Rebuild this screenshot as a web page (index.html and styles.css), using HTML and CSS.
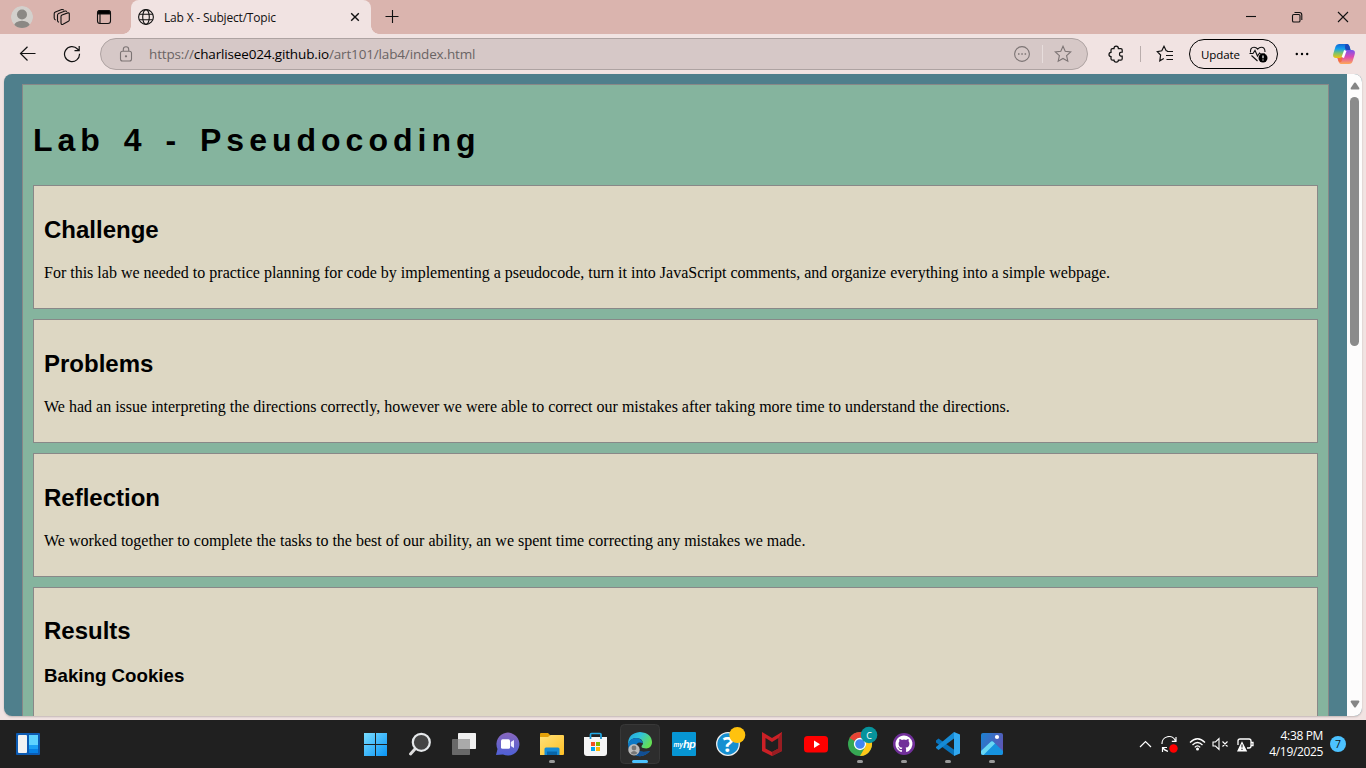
FILE: index.html
```html
<!DOCTYPE html>
<html lang="en">
<head>
<meta charset="utf-8">
<title>Lab X - Subject/Topic</title>
<link rel="stylesheet" href="styles.css">
</head>
<body>
<header class="titlebar">
  <svg class="profile" width="22" height="22" viewBox="0 0 22 22"><defs><clipPath id="pc"><circle cx="11" cy="11" r="11"/></clipPath></defs><g clip-path="url(#pc)"><circle cx="11" cy="11" r="11" fill="#d3d0cc"/><circle cx="11" cy="8.5" r="5" fill="#8b8884"/><ellipse cx="11" cy="20" rx="8" ry="5.2" fill="#8b8884"/></g></svg>
  <svg class="line workspaces" width="18" height="18" viewBox="0 0 18 18"><path d="M8 8.500Q8 7.300 9 6.900L14.800 4.900Q16.300 4.600 16.300 6V12Q16.300 12.900 15.400 13.300L10 16.300Q8 17 8 15ZM6 14.300Q4.500 14 4.500 12.500V7.300Q4.500 6 5.600 5.500L12 3Q13.300 2.700 13.800 3.800M2.700 12Q1.200 11.500 1.200 10V5.700Q1.200 4.500 2.400 4L8.700 1.500Q10.300 1.200 10.800 2.300"/></svg>
  <svg class="line actions" width="16" height="16" viewBox="0 0 16 16"><rect x="1.500" y="1.500" width="13" height="13" rx="2.500"/><path d="M2 2.500Q2 1.500 4 1.500H12Q14 1.500 14 2.500V5H2Z" fill="#000"/><path d="M4 5V14"/></svg>
  <div class="tab">
    <svg class="line globe" width="16" height="16" viewBox="0 0 16 16"><circle cx="8" cy="8" r="7.400"/><ellipse cx="8" cy="8" rx="3.300" ry="7.400"/><path d="M1.300 5.300H14.700M1.300 10.700H14.700"/></svg>
    <span class="tab-title">Lab X - Subject/Topic</span>
    <svg class="line" width="10" height="10" viewBox="0 0 10 10"><path d="M1.200 1.200 8.800 8.800M8.800 1.200 1.200 8.800" stroke-width="1.400"/></svg>
  </div>
  <svg class="line plus" width="14" height="14" viewBox="0 0 14 14"><path d="M.5 6.500H13.500M7.500 0V13"/></svg>
  <div class="controls">
    <svg class="line" width="12" height="12" viewBox="0 0 12 12"><path d="M1 5.500H11"/></svg>
    <svg class="line" width="12" height="12" viewBox="0 0 12 12"><rect x="1.500" y="3.500" width="7.500" height="7.500" rx="1.300"/><path d="M3.500 1.500H8.500Q10.800 1.500 10.800 4V9"/></svg>
    <svg class="line" width="12" height="12" viewBox="0 0 12 12"><path d="M1 1 11 11M11 1 1 11"/></svg>
  </div>
</header>

<nav class="toolbar">
  <svg class="line back" width="18" height="16" viewBox="0 0 18 16"><path d="M8.500 .8 1.500 7.500 8.500 14.500M1.500 7.500H16.500" stroke-width="1.200"/></svg>
  <svg class="line reload" width="18" height="18" viewBox="0 0 18 18"><path d="M16.500 8.700A7.500 7.500 0 1 1 14.500 4L16 5.500M16.200 1V5.700H11.500" stroke-width="1.200"/></svg>
  <div class="address">
    <svg class="line gray lock" width="14" height="16" viewBox="0 0 14 16"><rect x="1.500" y="5.200" width="11" height="9.800" rx="2"/><path d="M4.300 5V3.500A2.700 2.700 0 0 1 9.700 3.500V5"/><circle cx="7" cy="10.300" r=".6" fill="#707070"/></svg>
    <div class="url"><span>https://</span><b>charlisee024.github.io</b><span>/art101/lab4/index.html</span></div>
    <svg class="line gray" width="16" height="16" viewBox="0 0 16 16"><circle cx="8" cy="8" r="7.400"/><path d="M4 8H5.500M7.300 8H8.800M10.600 8H12.100" stroke-width="1.500"/></svg>
    <i class="split pale"></i>
    <svg class="line gray" width="18" height="18" viewBox="0 0 18 18"><path d="M9 1.300 11.200 6.300 16.700 6.900 12.600 10.600 13.800 16.200 9 13.400 4.200 16.200 5.400 10.600 1.300 6.900 6.800 6.300Z"/></svg>
  </div>
  <svg class="line extension" width="16" height="18" viewBox="0 0 16 18"><path d="M4.500 3.500H6Q6 1.200 8.200 1.200T10.400 3.500H12.800Q14.200 3.500 14.200 5V7.200Q11.500 7 11.500 9.200T14.200 11.200V13.700Q14.200 15.200 12.800 15.200H10.400Q10.400 17 8.200 17T6 15.200H4.500Q3 15.200 3 13.700V11.600Q1 11.600 1 9.500T3 7.300V5Q3 3.500 4.500 3.500Z" stroke-width="1.250"/></svg>
  <i class="split"></i>
  <svg class="line favorites" width="18" height="18" viewBox="0 0 18 18"><path d="M11.500 5.900 10.200 5.700 8 1.300 5.800 5.800 1.300 6.600 4.600 10 3.800 15.800 7.800 13.500M11 6.500H17M10 10.500H17M10.500 14.500H17" stroke-width="1.200"/></svg>
  <div class="update"><span>Update</span>
    <svg class="line" width="19" height="17" viewBox="0 0 19 17"><path d="M1.500 6.500Q1 1.300 5 1.300Q7.300 1.300 8.700 3.200Q10.200 1.300 12.300 1.300Q16 1.300 16 6M2.500 9.500 8.500 15M.5 7.500H4L6 4.500 8.500 10 10.500 7 11.500 8H16"/><circle cx="14" cy="12" r="4.500" fill="#000" stroke="none"/><path d="M14 9.500V12.200M14 13.500V14.500" stroke="#fff" stroke-width="1.200"/></svg>
  </div>
  <svg class="more" width="14" height="4" viewBox="0 0 14 4"><circle cx="1.800" cy="2" r="1.200"/><circle cx="7" cy="2" r="1.200"/><circle cx="12.200" cy="2" r="1.200"/></svg>
  <svg class="copilot" width="22" height="22" viewBox="0 0 22 22"><defs><linearGradient id="ca" x2="0" y2="1"><stop stop-color="#1268d5"/><stop offset=".35" stop-color="#13a0ed"/><stop offset=".65" stop-color="#7cc36b"/><stop offset="1" stop-color="#f4c20e"/></linearGradient><linearGradient id="cb" x2="0" y2="1"><stop stop-color="#7853ee"/><stop offset=".5" stop-color="#dc4bb1"/><stop offset="1" stop-color="#ffaa56"/></linearGradient></defs><path d="M6 1H14Q16 1 17 5L17.500 7H15Q12 7 11 10L9.500 15H3Q-1 15 .5 10L2.500 3.500Q3.300 1 6 1Z" fill="url(#ca)"/><path d="M12.500 1H14Q16 1 17 5L17.500 7H14Q11 7 12.500 1Z" fill="#1949bc"/><path d="M16.500 7H19Q23 7 21.500 12L19.700 18Q19 21 16 21H8Q6 21 5 17L4.500 15H7Q10 15 11 12L12.500 7Z" fill="url(#cb)"/><path d="M4.500 15H7Q9 15 10 13L9 17Q8 21 5.500 18Z" fill="#f36e44"/><path d="M12.300 7.500 9.800 14.500" stroke="#fff" stroke-width="2.500"/></svg>
</nav>

<div class="frame">
  <div class="viewport">
    <main class="page">
      <h1>Lab 4 - Pseudocoding</h1>
      <section><h2>Challenge</h2><p>For this lab we needed to practice planning for code by implementing a pseudocode, turn it into JavaScript comments, and organize everything into a simple webpage.</p></section>
      <section><h2>Problems</h2><p>We had an issue interpreting the directions correctly, however we were able to correct our mistakes after taking more time to understand the directions.</p></section>
      <section><h2>Reflection</h2><p>We worked together to complete the tasks to the best of our ability, an we spent time correcting any mistakes we made.</p></section>
      <section class="results"><h2>Results</h2><h3>Baking Cookies</h3></section>
    </main>
    <div class="scrollbar">
      <svg width="10" height="8" viewBox="0 0 10 8"><path d="M4.200.8Q5 0 5.800.8L9.300 6Q9.700 7.500 8.500 7.500H1.500Q.3 7.500.7 6Z"/></svg>
      <div class="thumb"></div>
      <svg width="10" height="8" viewBox="0 0 10 8"><path d="M4.200 7.200Q5 8 5.800 7.200L9.300 2Q9.700.5 8.500.5H1.500Q.3.5.7 2Z"/></svg>
    </div>
  </div>
</div>

<footer class="taskbar">
  <svg class="widgets" width="24" height="22" viewBox="0 0 24 22"><rect width="24" height="22" rx="1" fill="#0c5bb3"/><rect x="2" y="2" width="9" height="18" rx="1" fill="#f2f2f2"/><rect x="13" y="2" width="9" height="10" fill="#5ed3ff"/><rect x="13" y="12" width="9" height="4" fill="#1ba0f4"/><rect x="13" y="16" width="9" height="4" fill="#0681e6"/></svg>
  <div class="apps">
    <svg viewBox="0 0 44 48"><defs><linearGradient id="win" x2="1" y2="1"><stop stop-color="#78dcff"/><stop offset="1" stop-color="#0994f5"/></linearGradient></defs><path d="M10 13H21V24H10ZM22 13H33V24H22ZM10 25H21V36H10ZM22 25H33V36H22Z" fill="url(#win)"/></svg>
    <svg viewBox="0 0 44 48"><path d="M12.500 34 17 29" stroke="#ddd" stroke-width="3" stroke-linecap="round"/><circle cx="23.300" cy="22.300" r="8.500" fill="#444" stroke="#e5e8ea" stroke-width="2.200"/></svg>
    <svg viewBox="0 0 44 48"><rect x="16" y="13" width="18" height="16" rx=".7" fill="#f1f1f1"/><rect x="10" y="19" width="18" height="16" rx=".7" fill="#686868"/><path d="M16 19H28V29H16Z" fill="#aaa"/></svg>
    <svg viewBox="0 0 44 48"><defs><linearGradient id="chat" x2="0" y2="1"><stop stop-color="#8867bd"/><stop offset="1" stop-color="#4e60d6"/></linearGradient></defs><path d="M10 35 11.500 29A11.500 11.500 0 1 1 17 34.500Z" fill="url(#chat)"/><rect x="15" y="19.300" width="9" height="9.500" rx="1.500" fill="#fff"/><path d="M24.800 22 28 20V28L24.800 26Z" fill="#eef"/></svg>
    <svg viewBox="0 0 44 48"><defs><linearGradient id="fold" x2="1" y2="1"><stop stop-color="#ffe17a"/><stop offset="1" stop-color="#ffc025"/></linearGradient></defs><path d="M10 14Q10 13 11 13H18L20 15V20H10Z" fill="#e3a008"/><path d="M10 17H18L20.500 15H33Q34 15 34 16V34Q34 35 33 35H10Z" fill="url(#fold)"/><path d="M14.500 35V29Q14.500 27.500 16 27.500H28Q29.500 27.500 29.500 29V35Z" fill="#168bd5"/><path d="M17 31.500H27V35H17Z" fill="#0865a8"/><rect class="run" x="19" y="40" width="6" height="3" rx="1.500"/></svg>
    <svg viewBox="0 0 44 48"><path d="M16.500 18V14.500Q16.500 13.500 17.500 13.500H26Q27 13.500 27 14.500V18" fill="none" stroke="#21a9e6" stroke-width="1.700"/><path d="M10 17H33V33Q33 36 30 36H13Q10 36 10 33Z" fill="#f5f5f5"/><path d="M17 22H21V26H17Z" fill="#f25022"/><path d="M22 22H26V26H22Z" fill="#7fba00"/><path d="M17 27H21V31H17Z" fill="#00a4ef"/><path d="M22 27H26V31H22Z" fill="#ffb900"/><path d="M16.500 17V19M27 17V19" stroke="#168bc5" stroke-width="1.700"/></svg>
    <svg viewBox="0 0 44 48"><defs><linearGradient id="edge" x2="1" y2=".5"><stop stop-color="#20a4e7"/><stop offset=".5" stop-color="#31c4da"/><stop offset="1" stop-color="#64df55"/></linearGradient></defs><rect x="2.500" y="4.500" width="39" height="39" rx="4" fill="#2d2d2d" stroke="#383838"/><path d="M10 24Q10 13 22 12Q34 13 34 23Q33 30 25 28Q22 27 25 24Q25 18 18 18Q12 18 10 25Z" fill="url(#edge)"/><path d="M10 24Q12 18 18 18Q23 18 25 23Q18 21 18 27Q19 34 32 31Q27 37 20 36Q10 34 10 24Z" fill="#0c78c6"/><path d="M18 25Q18 34 32 31Q27 37 20 36Q14 30 18 25Z" fill="#124f94"/><circle cx="16" cy="29.700" r="5.700" fill="#bbb"/><circle cx="16" cy="28" r="2.400" fill="#777"/><path d="M12.500 33Q16 29 19.500 33Q16 36 12.500 33" fill="#777"/><rect x="14" y="40" width="16" height="3" rx="1.500" fill="#4cc2ff"/></svg>
    <svg viewBox="0 0 44 48"><rect x="10" y="12" width="24" height="24" rx="1" fill="#0796d4"/><text x="11.500" y="27" class="my">my</text><text x="21" y="27.500" class="hp">hp</text></svg>
    <svg viewBox="0 0 44 48"><circle cx="22" cy="24" r="11.300" fill="#168fd1" stroke="#eee" stroke-width="1.300"/><text x="22" y="31.500" class="question">?</text><circle cx="31.300" cy="15" r="8" fill="#ffc20e"/></svg>
    <svg viewBox="0 0 44 48"><path d="M12 12 22 18 32 12V31L22 36 12 31ZM15.500 18V28.500L22 32 28.500 28.500V18L22 22Z" fill="#cb2026" fill-rule="evenodd"/><path d="M32 12V31L22 36V32L28.500 28.500V18Z" fill="#981d22"/></svg>
    <svg viewBox="0 0 44 48"><rect x="10" y="16" width="24" height="16.500" rx="3.500" fill="#f00"/><path d="M20 20.500 26 24.200 20 28Z" fill="#fff"/></svg>
    <svg viewBox="0 0 44 48"><circle cx="22" cy="24" r="12" fill="#36a853"/><path d="M11.600 18A12 12 0 0 1 32.400 18H22Q18 18 16.800 21Z" fill="#e74335"/><path d="M32.400 18A12 12 0 0 1 22 36L27.200 27Q29 23 26 18Z" fill="#ffc719"/><circle cx="22" cy="24" r="5.500" fill="#4285f4" stroke="#fff" stroke-width="1.300"/><circle cx="31" cy="15" r="8.300" fill="#07939c"/><text x="31" y="18.500" class="letter">C</text><rect class="run" x="19" y="40" width="6" height="3" rx="1.500"/></svg>
    <svg viewBox="0 0 44 48"><circle cx="22" cy="24" r="11" fill="#71309a"/><g transform="translate(13.500 15.500) scale(1.060)"><path d="M8 0C3.580 0 0 3.580 0 8c0 3.540 2.290 6.530 5.470 7.590.4.070.55-.17.550-.38 0-.19-.01-.82-.01-1.490-2.010.37-2.530-.49-2.690-.94-.09-.23-.48-.94-.82-1.130-.28-.15-.68-.52-.01-.53.630-.01 1.080.58 1.230.82.720 1.210 1.870.87 2.330.66.070-.52.280-.87.510-1.070-1.780-.2-3.640-.89-3.640-3.950 0-.87.310-1.590.82-2.150-.08-.2-.36-1.020.08-2.120 0 0 .67-.21 2.200.82a7.600 7.600 0 0 1 4 0c1.530-1.040 2.200-.82 2.200-.82.440 1.100.16 1.920.08 2.120.51.560.82 1.270.82 2.150 0 3.070-1.870 3.750-3.650 3.950.29.250.54.730.54 1.480 0 1.070-.01 1.930-.01 2.200 0 .21.150.46.550.38A8 8 0 0 0 8 0" fill="#fff"/></g><rect class="run" x="19" y="40" width="6" height="3" rx="1.500"/></svg>
    <svg viewBox="0 0 44 48"><path d="M10 20.500 12.500 18.500 28.500 30V36L10 22.500Z" fill="#0872ba"/><path d="M10 27 28 12V18.500L12.500 30 10 28Z" fill="#168bd5"/><path d="M28 12 34 14.500V33.500L28 36Z" fill="#31a8f0"/><rect class="run" x="19" y="40" width="6" height="3" rx="1.500"/></svg>
    <svg viewBox="0 0 44 48"><defs><linearGradient id="photo" x2="1" y2=".5"><stop stop-color="#1b82d2"/><stop offset="1" stop-color="#5b57b5"/></linearGradient></defs><rect x="11" y="13" width="22" height="22" rx="2" fill="url(#photo)"/><path d="M11 31 20.500 22Q22 20.500 23.500 22L33 31V33Q33 35 31 35H13Q11 35 11 33Z" fill="#1693df"/><path d="M11 31 20.500 22Q22 20.500 23.500 22L25 23.500 13.500 35Q11 35 11 33Z" fill="#68d7f4"/><circle cx="27" cy="17" r="2.100" fill="#fff"/><rect class="run" x="19" y="40" width="6" height="3" rx="1.500"/></svg>
  </div>
  <div class="tray">
    <svg class="line" width="13" height="8" viewBox="0 0 13 8"><path d="M1 7 6.500 1.500 12 7" stroke-width="1.200"/></svg>
    <svg class="line sync" width="17" height="17" viewBox="0 0 17 17"><path d="M1 8A7 7 0 0 1 14.500 5M15 1V5.300H10.800M7 15.300Q3 14.500 2 11.500M1.500 16V11.500H6" stroke-width="1.200"/><circle cx="12.500" cy="12.500" r="4.200" fill="red" stroke="none"/></svg>
    <svg class="line wifi" width="17" height="14" viewBox="0 0 17 14"><path d="M1 5.500Q8.500-2 16 5.500M3.500 8Q8.500 3 13.500 8M5.800 10.400Q8.500 7.500 11.200 10.400" stroke-width="1.300"/><circle cx="8.500" cy="12" r="1.500" fill="#fff" stroke="none"/></svg>
    <svg class="line mute" width="17" height="14" viewBox="0 0 17 14"><path d="M1 5H3.500L7 1.500V12.500L3.500 9H1ZM10.500 4.500 15.500 9.500M15.500 4.500 10.500 9.500"/></svg>
    <svg class="line battery" width="17" height="15" viewBox="0 0 17 15"><path d="M1 8V4Q1 2 3 2H12Q14 2 14 4V9Q14 11 12 11H10M14.500 5.500H16V8.500H14.500" stroke-width="1.300"/><path d="M5 5.500 9.300 14H.8Z" fill="#fff" stroke="#fff"/><path d="M5 7.500V10.500M5 11.800V13" stroke="#202020"/></svg>
    <div class="clock"><span>4:38 PM</span><span>4/19/2025</span></div>
    <span class="count">7</span>
  </div>
</footer>
</body>
</html>
```
FILE: styles.css
```css
* { box-sizing: border-box; }
body {
  margin: 0;
  width: 1366px;
  height: 768px;
  overflow: hidden;
  display: flex;
  flex-direction: column;
  background: #f1e3e2;
  font-family: "Open Sans", "Noto Sans", sans-serif;
}
svg { display: block; flex: none; }
.line { fill: none; stroke: #111; stroke-width: 1.1; }
.gray { stroke: #7c7474; }

.titlebar { height: 34px; display: flex; align-items: center; background: #dab4ae; flex: none; }
.profile { margin-left: 11px; }
.workspaces { margin-left: 20px; }
.actions { margin-left: 25px; }
.tab {
  position: relative;
  width: 240px;
  height: 34px;
  margin-left: 19px;
  padding: 0 11px 0 7px;
  display: flex;
  align-items: center;
  background: #f1e3e2;
  border-radius: 8px 8px 0 0;
}
.tab::before, .tab::after {
  content: "";
  position: absolute;
  bottom: 0;
  width: 8px;
  height: 8px;
}
.tab::before { left: -8px; background: radial-gradient(circle at 0 0, #dab4ae 7.5px, #f1e3e2 8px); }
.tab::after { right: -8px; background: radial-gradient(circle at 100% 0, #dab4ae 7.5px, #f1e3e2 8px); }
.tab-title { flex: 1; margin-left: 10px; font-size: 12px; letter-spacing: -.19px; color: #111; white-space: nowrap; }
.plus { margin-left: 14px; }
.controls { margin-left: auto; margin-right: 17px; display: flex; gap: 34px; }

.toolbar { height: 40px; display: flex; align-items: center; flex: none; }
.back { margin-left: 19px; }
.reload { margin-left: 26px; }
.address {
  width: 988px;
  height: 32px;
  margin-left: 19px;
  padding: 0 15px 0 18px;
  display: flex;
  align-items: center;
  background: #d6c8c7;
  border: 1px solid #aea3a2;
  border-radius: 16px;
}
.url { flex: 1; margin-left: 16px; font-size: 13.5px; letter-spacing: -.15px; color: #6a6464; white-space: nowrap; }
.url b { font-weight: 400; color: #000; }
.split { width: 1px; height: 16px; background: #b9adac; }
.pale { height: 18px; margin: 0 11px 0 12px; background: #e7dddc; }
.extension { margin: 0 16px 0 20px; }
.favorites { margin-left: 15px; }
.update {
  width: 89px;
  height: 30px;
  margin-left: 15px;
  padding: 0 9px 0 11px;
  display: flex;
  align-items: center;
  justify-content: space-between;
  border: 1px solid #000;
  border-radius: 15px;
  font-size: 11.5px;
  letter-spacing: -.1px;
}
.more { margin-left: 17px; }
.copilot { margin-left: 24px; }

.frame { height: 646px; padding: 0 4px 4px; flex: none; }
.viewport { height: 642px; display: flex; overflow: hidden; border-radius: 8px; background: #4f7f8c; box-shadow: 0 1px 2px #0003; }
.page {
  width: 1307px;
  height: 760px;
  flex: none;
  margin: 10px 18px 0;
  padding: 10px;
  background: #85b49e;
  border: 1px solid #888;
}
h1, h2, h3 { font-family: "Liberation Sans", Arial, sans-serif; color: #000; }
h1 { margin: 25px 0 25px; font-size: 32px; line-height: 40px; letter-spacing: 5px; word-spacing: 5px; }
section { height: 124px; margin-bottom: 10px; padding: 10px; background: #ddd7c3; border: 1px solid #888; }
h2 { margin: 20px 0; font-size: 24px; line-height: 27px; }
h3 { margin: 0; font-size: 18.72px; line-height: 22px; }
p { margin: 0; font: 16px/20px "Liberation Serif", "Times New Roman", serif; color: #000; white-space: nowrap; }
.results { height: 300px; }
.results h2 { margin-top: 19px; }
.results h3 { padding-top: 1px; }
.scrollbar { width: 15px; padding: 8px 0; display: flex; flex-direction: column; align-items: center; background: #fdfcfc; fill: #858585; }
.thumb { width: 9px; height: 249px; margin: 7px 0 auto; background: #8b8b8b; border-radius: 4.5px; }

.taskbar { height: 48px; display: flex; align-items: center; background: #202020; flex: none; }
.widgets { margin-left: 16px; }
.apps { display: flex; margin-left: 314px; }
.apps svg { width: 44px; height: 48px; }
.run { fill: #999; }
.my, .hp { font-family: "Liberation Sans", sans-serif; font-style: italic; font-weight: 700; fill: #fff; }
.my { font-size: 6.5px; }
.hp { font-size: 11px; letter-spacing: -.8px; }
.question { font: 700 22px "Open Sans", sans-serif; fill: #fff; text-anchor: middle; }
.letter { font: 9px "Open Sans", sans-serif; fill: #fff; text-anchor: middle; }
.tray { flex: 1; display: flex; align-items: center; margin-left: 125px; color: #fff; }
.tray .line { stroke: #fff; }
.tray .sync { margin-left: 9px; }
.tray .wifi { margin-left: 11px; }
.tray .mute { margin-left: 6px; }
.tray .battery { margin-left: 8px; }
.clock { width: 69px; display: flex; flex-direction: column; align-items: flex-end; font-size: 12px; line-height: 16px; letter-spacing: -.35px; white-space: nowrap; }
.count { width: 16px; height: 16px; margin-left: 7px; border-radius: 50%; background: #4cc2ff; color: #111; font-size: 10.5px; line-height: 16px; text-align: center; }
```
